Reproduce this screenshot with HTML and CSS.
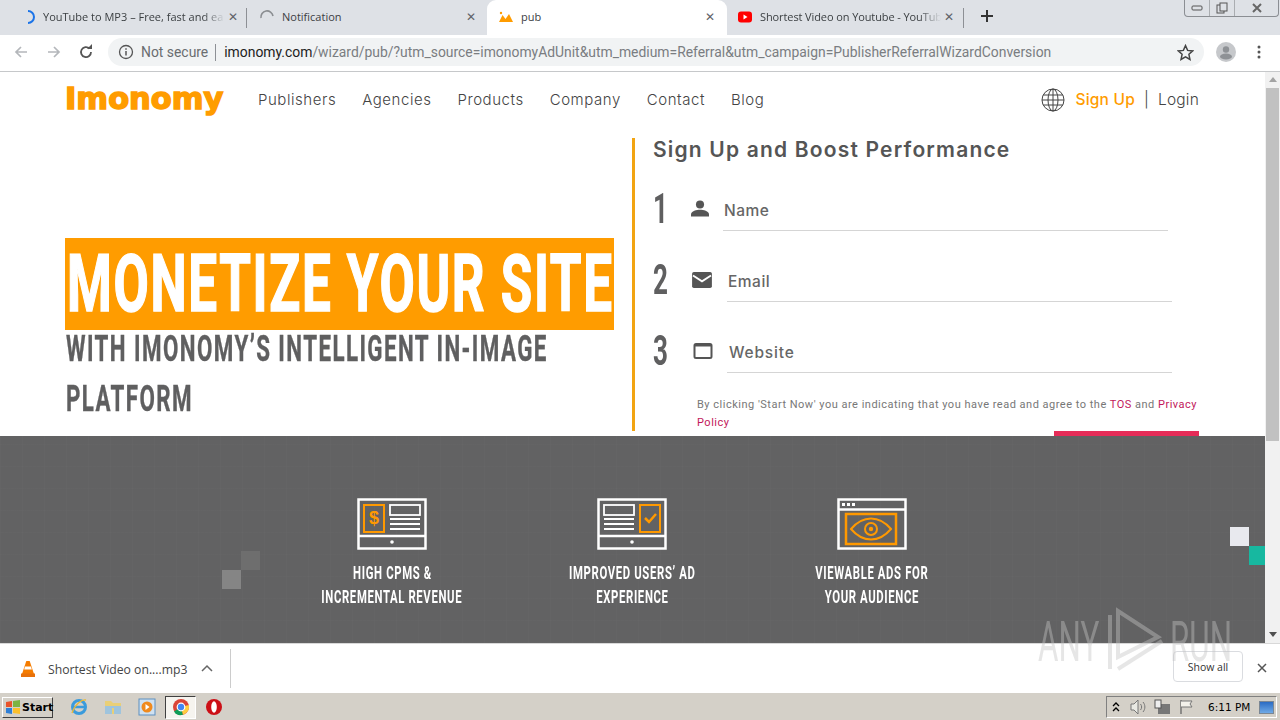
FILE: index.html
```html
<!DOCTYPE html>
<html lang="en">
<head>
<meta charset="utf-8">
<title>pub</title>
<link rel="stylesheet" href="styles.css">
</head>
<body>
<div class="chrome-tabs">
  <div class="tab">
    <svg class="fav" viewBox="0 0 16 16"><path d="M8 2a6 6 0 0 1 0 12" fill="none" stroke="#1a73e8" stroke-width="2"/></svg>
    <span class="tab-title">YouTube to MP3 – Free, fast and ea</span>
    <span class="tab-x">✕</span>
  </div>
  <div class="tab sep">
    <svg class="fav" viewBox="0 0 16 16"><path d="M2 9a6 6 0 0 1 12 -2" fill="none" stroke="#8a8d91" stroke-width="1.6"/></svg>
    <span class="tab-title">Notification</span>
    <span class="tab-x">✕</span>
  </div>
  <div class="tab active">
    <svg class="fav" viewBox="0 0 16 16"><path d="M1 13 4.500 6 7.500 10 11 5 15 13Z" fill="#ff9c00"/><circle cx="3" cy="4" r="1.200" fill="#ff9c00"/></svg>
    <span class="tab-title">pub</span>
    <span class="tab-x">✕</span>
  </div>
  <div class="tab sep">
    <svg class="fav" viewBox="0 0 16 16"><rect x="1" y="2.500" width="14" height="11" rx="3" fill="#f00"/><path d="M6.500 5.500 10.500 8 6.500 10.500Z" fill="#fff"/></svg>
    <span class="tab-title">Shortest Video on Youtube - YouTub</span>
    <span class="tab-x">✕</span>
  </div>
  <svg class="new-tab" viewBox="0 0 14 14"><path d="M7 1v12M1 7h12" stroke="#333" stroke-width="2"/></svg>
  <div class="win-btns">
    <span class="win-btn"><svg viewBox="0 0 12 8" width="12" height="8"><rect x="1" y="2" width="10" height="4" rx="1" fill="none" stroke="#555"/></svg></span>
    <span class="win-btn"><svg viewBox="0 0 12 12" width="12" height="12"><rect x="1" y="3" width="7" height="8" fill="none" stroke="#555"/><rect x="4" y="1" width="7" height="8" fill="#dee1e6" stroke="#555"/></svg></span>
    <span class="win-btn wide"><svg viewBox="0 0 12 12" width="12" height="12"><path d="M2 2l8 8M10 2l-8 8" stroke="#666" stroke-width="2" fill="none"/></svg></span>
  </div>
</div>

<div class="toolbar">
  <svg class="tool-ico back" viewBox="0 0 16 16"><path d="M14 8H3M8 3 3 8l5 5" fill="none" stroke="#b4b7bb" stroke-width="1.700"/></svg>
  <svg class="tool-ico fwd" viewBox="0 0 16 16"><path d="M2 8h11M8 3l5 5-5 5" fill="none" stroke="#b4b7bb" stroke-width="1.700"/></svg>
  <svg class="tool-ico reload" viewBox="0 0 16 16"><path d="M13 8a5 5 0 1 1-1.500-3.500" fill="none" stroke="#555" stroke-width="1.800"/><path d="M9 5h5V0Z" fill="#555"/></svg>
  <div class="omnibox">
    <svg class="info" viewBox="0 0 16 16"><circle cx="8" cy="8" r="6.500" fill="none" stroke="#555" stroke-width="1.300"/><path d="M8 7v4.500M8 4.300v1.500" stroke="#555" stroke-width="1.500"/></svg>
    <span class="not-secure">Not secure</span>
    <span class="omni-sep"></span>
    <span class="url"><b>imonomy.com</b>/wizard/pub/?utm_source=imonomyAdUnit&amp;utm_medium=Referral&amp;utm_campaign=PublisherReferralWizardConversion</span>
    <svg class="star" viewBox="0 0 16 16"><path d="M8 1.500 10 6l4.800.5-3.600 3.200 1 4.800L8 12l-4.200 2.500 1-4.800L1.200 6.500 6 6Z" fill="none" stroke="#444" stroke-width="1.400"/></svg>
  </div>
  <svg class="avatar" viewBox="0 0 20 20"><circle cx="10" cy="10" r="10" fill="#c6c8cb"/><circle cx="10" cy="7.500" r="3.200" fill="#8e9195"/><ellipse cx="10" cy="14.500" rx="6" ry="3" fill="#8e9195"/></svg>
  <svg class="dots" viewBox="0 0 4 16"><circle cx="2" cy="3" r="1.500" fill="#555"/><circle cx="2" cy="8" r="1.500" fill="#555"/><circle cx="2" cy="13" r="1.500" fill="#555"/></svg>
</div>

<div class="viewport">
  <div class="page">
    <header class="site-head">
      <a class="logo">Imonomy</a>
      <nav class="site-nav">
        <a>Publishers</a><a>Agencies</a><a>Products</a><a>Company</a><a>Contact</a><a>Blog</a>
      </nav>
      <div class="auth">
        <svg class="globe" viewBox="0 0 24 24"><g fill="none" stroke="#444" stroke-width="1"><circle cx="12" cy="12" r="11"/><ellipse cx="12" cy="12" rx="5" ry="11"/><path d="M12 1v22M2 7h20M1 12h22M2 17h20"/></g></svg>
        <a class="signup">Sign Up</a>
        <span class="bar">|</span>
        <a class="login">Login</a>
      </div>
    </header>

    <section class="hero">
      <div class="pitch">
        <div class="pitch-box"><h1 class="squeeze">MONETIZE YOUR SITE</h1></div>
        <p class="pitch-line"><span class="squeeze">WITH IMONOMY’S INTELLIGENT IN-IMAGE</span></p>
        <p class="pitch-line"><span class="squeeze">PLATFORM</span></p>
      </div>
      <div class="signup-form">
        <h2>Sign Up and Boost Performance</h2>
        <div class="field">
          <span class="num squeeze">1</span>
          <svg class="f-ico" viewBox="2 3 20 18"><circle cx="12" cy="7.500" r="4.500" fill="#555"/><path d="M2 21v-2.500c0-3.500 6.500-5 10-5s10 1.500 10 5V21Z" fill="#555"/></svg>
          <div class="f-input"><span>Name</span></div>
        </div>
        <div class="field second">
          <span class="num squeeze">2</span>
          <svg class="f-ico mail" viewBox="0 0 24 20"><rect x="1" y="1" width="22" height="18" rx="2" fill="#555"/><path d="M2 5l10 6.500L22 5" fill="none" stroke="#fff" stroke-width="2"/></svg>
          <div class="f-input"><span>Email</span></div>
        </div>
        <div class="field second">
          <span class="num squeeze">3</span>
          <svg class="f-ico web" viewBox="0 0 20 18"><rect x="1.500" y="2" width="17" height="14" rx="1.500" fill="none" stroke="#555" stroke-width="2"/><path d="M1.500 3.500h17" stroke="#555" stroke-width="2"/></svg>
          <div class="f-input web-input"><span>Website</span></div>
        </div>
        <p class="legal">By clicking 'Start Now' you are indicating that you have read and agree to the <a>TOS</a> and <a>Privacy Policy</a></p>
        <div class="start-wrap"><button class="start" aria-label="Start Now"></button></div>
      </div>
    </section>

    <section class="band">
      <span class="pix pix-a"></span>
      <span class="pix pix-b"></span>
      <span class="pix pix-c"></span>
      <span class="pix pix-d"></span>
      <div class="feature">
        <svg class="f-art" viewBox="0 0 70 52"><g fill="none" stroke="#fff" stroke-width="2.500"><rect x="1.500" y="1.500" width="67" height="49"/><path d="M1.500 38h67"/><rect x="33" y="7" width="30" height="10" stroke-width="1.800"/><path d="M33 21h30M33 26h30M33 31h30" stroke-width="2"/></g><rect x="7" y="7" width="20" height="27" fill="none" stroke="#f90" stroke-width="2"/><text class="dollar" x="17" y="26" text-anchor="middle">$</text><circle cx="35" cy="44" r="1.800" fill="#fff"/></svg>
        <h3><span class="squeeze">HIGH CPMS &amp;</span><br><span class="squeeze">INCREMENTAL REVENUE</span></h3>
      </div>
      <div class="feature">
        <svg class="f-art" viewBox="0 0 70 52"><g fill="none" stroke="#fff" stroke-width="2.500"><rect x="1.500" y="1.500" width="67" height="49"/><path d="M1.500 38h67"/><rect x="7" y="7" width="30" height="10" stroke-width="1.800"/><path d="M7 21h30M7 26h30M7 31h30" stroke-width="2"/></g><rect x="43" y="7" width="20" height="27" fill="none" stroke="#f90" stroke-width="2"/><path d="M48 20l4 4 7-8" fill="none" stroke="#f90" stroke-width="2.500"/><circle cx="35" cy="44" r="1.800" fill="#fff"/></svg>
        <h3><span class="squeeze">IMPROVED USERS’ AD</span><br><span class="squeeze">EXPERIENCE</span></h3>
      </div>
      <div class="feature">
        <svg class="f-art" viewBox="0 0 70 52"><g fill="none" stroke="#fff" stroke-width="2.500"><rect x="1.500" y="1.500" width="67" height="49"/><path d="M1.500 11.500h67"/></g><path d="M5 5h3v3H5zM10 5h3v3h-3zM15 5h3v3h-3z" fill="#fff"/><rect x="9" y="16" width="50" height="30" fill="none" stroke="#f90" stroke-width="2.500"/><path d="M14 31c12-14 28-14 40 0-12 14-28 14-40 0Z" fill="none" stroke="#f90" stroke-width="2"/><circle cx="34" cy="31" r="6" fill="none" stroke="#f90" stroke-width="2"/><circle cx="34" cy="31" r="2.200" fill="#f90"/></svg>
        <h3><span class="squeeze">VIEWABLE ADS FOR</span><br><span class="squeeze">YOUR AUDIENCE</span></h3>
      </div>
    </section>
  </div>
  <div class="scrollbar">
    <span class="arrow up"></span>
    <span class="thumb"></span>
    <span class="arrow down"></span>
  </div>
</div>

<div class="downloads">
  <svg class="cone" viewBox="0 0 16 18"><path d="M6.300 1h3.400L14 14H2Z" fill="#f57c00"/><path d="M5 6.500h6l.8 3H4.200Z" fill="#fff"/><path d="M1 13.500h14V17H1Z" fill="#e8710a"/></svg>
  <span class="dl-name">Shortest Video on....mp3</span>
  <svg class="chev" viewBox="0 0 12 8"><path d="M1 7l5-5 5 5" fill="none" stroke="#666" stroke-width="1.500"/></svg>
  <span class="dl-sep"></span>
  <button class="show-all">Show all</button>
  <svg class="dl-x" viewBox="0 0 10 10"><path d="M1 1l8 8M9 1 1 9" stroke="#555" stroke-width="1.500"/></svg>
</div>

<div class="taskbar">
  <button class="start-btn"><svg viewBox="0 0 16 16" width="16" height="16"><path d="M1 3l6-1v6H1z" fill="#e8532b"/><path d="M8 2l7-1v7H8z" fill="#7cb342"/><path d="M1 9h6v6l-6-1z" fill="#2f7fd6"/><path d="M8 9h7v6l-7-1z" fill="#fbc02d"/></svg>Start</button>
  <div class="quick">
    <svg class="q-ie" viewBox="0 0 18 18"><circle cx="9" cy="9" r="6.500" fill="none" stroke="#3a9bdc" stroke-width="3"/><path d="M3 9h12" stroke="#3a9bdc" stroke-width="2.500"/><path d="M2 15C5 6 12 1 16 2" fill="none" stroke="#e8b93a" stroke-width="1.300"/></svg>
    <svg class="q-folder" viewBox="0 0 18 18"><path d="M1 3h6l2 2h8v11H1Z" fill="#e9cf77"/><path d="M1 8h16v8H1Z" fill="#9fc4dd"/><path d="M8 10h2v6H8Z" fill="#e9cf77"/></svg>
    <svg class="q-wmp" viewBox="0 0 18 18"><rect x="1" y="1" width="16" height="16" fill="#cfe1f1" stroke="#5d8fbf"/><circle cx="9" cy="9" r="5.500" fill="#f08a1d"/><path d="M7.500 6l4 3-4 3Z" fill="#fff"/></svg>
    <span class="q-active"><svg viewBox="0 0 18 18" width="16" height="16"><circle cx="9" cy="9" r="8" fill="#db4437"/><path d="M9 9 2 13.500A8 8 0 0 0 11 16.800Z" fill="#0f9d58"/><path d="M9 9 16.800 7A8 8 0 0 1 11 16.800Z" fill="#ffcd40"/><circle cx="9" cy="9" r="3.800" fill="#4285f4" stroke="#fff" stroke-width="1.200"/></svg></span>
    <svg class="q-opera" viewBox="0 0 18 18"><circle cx="9" cy="9" r="8" fill="#cc0f16"/><ellipse cx="9" cy="9" rx="2.800" ry="5.800" fill="#fff"/></svg>
  </div>
  <div class="tray">
    <svg class="t-up" viewBox="0 0 8 10"><path d="M1 4l3-3 3 3M1 9l3-3 3 3" fill="none" stroke="#000" stroke-width="1.300"/></svg>
    <svg class="t-spk" viewBox="0 0 18 16"><path d="M2 5h3l4-4v14l-4-4H2Z" fill="#e9e9e3" stroke="#777"/><path d="M11.500 5c1.500 2 1.500 4 0 6M14 3c2.500 3 2.500 7 0 10" fill="none" stroke="#777"/></svg>
    <svg class="t-net" viewBox="0 0 18 16"><rect x="5" y="5" width="12" height="10" fill="#777"/><rect x="2" y="1" width="6" height="8" fill="#eee" stroke="#555"/></svg>
    <svg class="t-flag" viewBox="0 0 18 16"><path d="M3 1v14" stroke="#666" stroke-width="1.300"/><path d="M3 2h11l-2 3 2 3H3" fill="#f3f1ea" stroke="#777"/></svg>
    <span class="clock">6:11 PM</span>
    <span class="desk"></span>
  </div>
</div>

<div class="watermark" aria-hidden="true">
  <span>ANY</span>
  <svg viewBox="0 0 62 70" width="62" height="70"><g fill="none" stroke="#c4c4c4" stroke-width="4"><path d="M6 8v54M14 4v46l40-20Z"/><path d="M14 62l44-28"/></g></svg>
  <span>RUN</span>
</div>
</body>
</html>
```
FILE: styles.css
```css
* { box-sizing: border-box; }
html, body { margin: 0; height: 720px; overflow: hidden; }
body {
  width: 1280px;
  display: flex;
  flex-direction: column;
  position: relative;
  background: #fff;
  font-family: Roboto, "Liberation Sans", sans-serif;
  color: #555;
}
p, h1, h2, h3 { margin: 0; }
button { font: inherit; }
svg { display: block; flex: none; }

.squeeze { display: inline-block; white-space: nowrap; }

/* browser tabs */
.chrome-tabs {
  height: 35px;
  flex: none;
  display: flex;
  padding-left: 7px;
  background: #dee1e6;
  font-family: "Open Sans", sans-serif;
  font-size: 11px;
  color: #3c4043;
}
.tab {
  width: 240px;
  display: flex;
  align-items: center;
  padding: 0 6px 2px 13px;
  position: relative;
}
.tab.sep { padding-left: 12px; padding-right: 8px; }
.tab:nth-child(4) { padding-left: 10px; padding-right: 10px; letter-spacing: -.1px; }
.tab:nth-child(1)::after, .tab:nth-child(4)::after {
  content: "";
  position: absolute;
  right: 0;
  top: 8px;
  height: 20px;
  width: 1px;
  background: #8d9095;
}
.tab:nth-child(4)::after { right: 3px; }
.tab.active {
  background: #fff;
  border-radius: 9px 9px 0 0;
  padding-left: 11px;
  padding-right: 9px;
}
.fav { width: 16px; height: 16px; margin-right: 7px; }
.tab-title {
  flex: 1;
  min-width: 0;
  overflow: hidden;
  white-space: nowrap;
  -webkit-mask-image: linear-gradient(to right, #000 88%, transparent);
  mask-image: linear-gradient(to right, #000 88%, transparent);
}
.tab.active .tab-title, .tab:nth-child(2) .tab-title { -webkit-mask-image: none; mask-image: none; }
.tab-x { width: 16px; text-align: center; font-size: 12px; font-weight: 700; color: #5f6368; font-family: "DejaVu Sans", sans-serif; }
.new-tab { width: 14px; height: 14px; margin: 9px 0 0 13px; }
.win-btns {
  margin-left: auto;
  margin-right: 1px;
  height: 17px;
  display: flex;
  border: 1px solid #8b8e93;
  border-top: 0;
  border-radius: 0 0 4px 4px;
}
.win-btn { width: 25px; display: flex; align-items: center; justify-content: center; border-right: 1px solid #aaadb1; }
.win-btn.wide { width: 43px; border-right: 0; }

/* toolbar */
.toolbar {
  height: 37px;
  flex: none;
  display: flex;
  align-items: center;
  padding: 0 0 2px 13px;
  background: #fff;
  border-bottom: 1px solid #c6c8ca;
}
.tool-ico { width: 16px; height: 16px; }
.fwd { margin-left: 17px; }
.reload { margin-left: 16px; }
.omnibox {
  width: 1096px;
  height: 28px;
  margin-left: 14px;
  display: flex;
  align-items: center;
  padding: 0 10px;
  border-radius: 14px;
  background: #f1f3f4;
  font-family: Roboto, sans-serif;
  font-size: 13.900px;
  white-space: nowrap;
  color: #7a7d81;
}
.info { width: 16px; height: 16px; }
.not-secure { margin-left: 7px; color: #6a6d70; }
.omni-sep { width: 1px; height: 17px; margin: 0 8px 0 7px; background: #8d9095; }
.url { flex: 1; overflow: hidden; }
.url b { font-weight: 400; color: #222; }
.star { width: 17px; height: 17px; }
.avatar { width: 20px; height: 20px; margin-left: 12px; }
.dots { width: 4px; height: 16px; margin-left: 21px; }

/* page */
.viewport { flex: 1; min-height: 0; display: flex; }
.page { flex: 1; min-width: 0; display: flex; flex-direction: column; }
.site-head {
  height: 55px;
  flex: none;
  display: flex;
  align-items: center;
  padding: 0 66px 0 65px;
}
.logo {
  width: 159px;
  font-family: "DejaVu Sans", sans-serif;
  font-weight: 700;
  font-size: 30.500px;
  line-height: 1;
  color: #ff9c00;
  -webkit-text-stroke: 1.500px #ff9c00;
}
.site-nav { display: flex; gap: 26px; margin-left: 34px; font-family: Inter, sans-serif; font-weight: 300; font-size: 15px; letter-spacing: .55px; color: #444; }
.auth { margin-left: auto; display: flex; align-items: center; font-family: Inter, sans-serif; font-size: 15.500px; font-weight: 300; letter-spacing: .2px; color: #444; }
.globe { width: 24px; height: 24px; margin-right: 11px; }
.signup { color: #ff9c00; font-weight: 500; }
.bar { margin: 0 9px 0 9px; }

.hero { height: 309px; flex: none; display: flex; overflow: hidden; }
.pitch { width: 567px; margin-left: 65px; padding-top: 111px; flex: none; }
.pitch-box { width: 549px; height: 92px; background: #ff9c00; display: flex; align-items: center; }
.pitch-box h1 {
  font-size: 80px;
  line-height: 1;
  font-weight: 700;
  letter-spacing: 2.600px;
  color: #fff;
  -webkit-text-stroke: 1.500px #fff;
  transform: scaleX(.64);
  transform-origin: left center;
  margin-left: 2px;
}
.pitch-line {
  height: 50px;
  line-height: 50px;
  padding-left: 1px;
  font-size: 36px;
  font-weight: 700;
  letter-spacing: 2.300px;
  color: #5f5f60;
  -webkit-text-stroke: .4px #5f5f60;
}
.pitch-box + .pitch-line { margin-top: -6px; }
.pitch-line .squeeze { transform: scaleX(.62); transform-origin: left center; }

.signup-form {
  flex: 1;
  min-width: 0;
  height: 293px;
  margin-top: 11px;
  padding: 0 0 0 18px;
  border-left: 3px solid #f2a412;
}
.signup-form h2 { font-family: Inter, sans-serif; font-size: 21px; line-height: 24px; font-weight: 600; letter-spacing: 1.180px; color: #555; }
.field { height: 45px; margin-top: 24px; display: flex; align-items: center; width: 515px; }
.field.second { margin-top: 26px; width: 519px; }
.num {
  width: 38px;
  font-size: 42px;
  font-weight: 700;
  color: #5f5f60;
  transform: scaleX(.62);
  transform-origin: left center;
}
.f-ico { width: 18px; height: 17px; margin-right: 14px; }
.mail { width: 22px; height: 18px; }
.web { width: 20px; height: 18px; margin-left: 2px; margin-right: 14px; }
.f-input {
  flex: 1;
  height: 45px;
  display: flex;
  align-items: center;
  padding: 4px 0 0 1px;
  border-bottom: 1px solid #d5d5d5;
  font-family: Inter, sans-serif;
  font-size: 15.500px;
  font-weight: 500;
  letter-spacing: .5px;
  color: #666;
}
.web-input { padding-left: 2px; letter-spacing: .8px; }
.legal {
  margin: 23px 0 0 44px;
  width: 510px;
  font-size: 11px;
  line-height: 18px;
  letter-spacing: .5px;
  color: #777;
}
.legal a { color: #c2185b; }
.start-wrap { display: flex; justify-content: flex-end; width: 546px; margin-top: -1px; }
.start { width: 145px; height: 44px; border: 0; background: #e62c58; color: #fff; }

.band {
  flex: 1;
  min-height: 0;
  position: relative;
  display: flex;
  justify-content: center;
  padding: 62px 1px 0 0;
  background-color: #626263;
  background-image:
    repeating-linear-gradient(90deg, rgba(255,255,255,.015) 0 1px, transparent 1px 22px),
    repeating-linear-gradient(0deg, rgba(255,255,255,.012) 0 1px, transparent 1px 22px);
}
.pix { position: absolute; width: 19px; height: 19px; }
.pix-a { left: 222px; top: 134px; background: #858585; }
.pix-b { left: 241px; top: 115px; background: #6e6e6e; }
.pix-c { left: 1230px; top: 91px; background: #e8e9ee; }
.pix-d { left: 1249px; top: 110px; width: 16px; background: #17b8a0; }
.feature { width: 240px; display: flex; flex-direction: column; align-items: center; }
.f-art { width: 70px; height: 52px; }
.dollar { font: 700 18px "Liberation Sans", sans-serif; fill: #f90; }
.feature h3 {
  margin-top: 11px;
  text-align: center;
  font-size: 18px;
  line-height: 24px;
  font-weight: 700;
  letter-spacing: 1px;
  color: #fff;
  white-space: nowrap;
}
.feature .squeeze { transform: scaleX(.63); transform-origin: center; }

.scrollbar {
  width: 15px;
  flex: none;
  display: flex;
  flex-direction: column;
  background: #f1f1f1;
  align-items: center;
}
.arrow { width: 0; height: 0; border-left: 4px solid transparent; border-right: 4px solid transparent; }
.arrow.up { margin-top: 5px; border-bottom: 5px solid #a3a3a3; }
.arrow.down { margin-top: auto; margin-bottom: 6px; border-top: 5px solid #505050; }
.thumb { width: 13px; height: 353px; margin-top: 6px; background: #c1c1c1; }

/* downloads shelf */
.downloads {
  height: 49px;
  flex: none;
  display: flex;
  align-items: center;
  padding: 2px 0 0 20px;
  background: #fff;
  border-top: 1px solid #d8d8d8;
  font-family: "Open Sans", sans-serif;
  font-size: 12.200px;
  color: #444;
}
.cone { width: 16px; height: 18px; margin-right: 12px; }
.dl-name { width: 139px; white-space: nowrap; }
.chev { width: 12px; height: 8px; margin: -2px 0 0 14px; }
.dl-sep { width: 1px; height: 39px; margin: -2px 0 0 17px; background: #ccc; }
.show-all {
  width: 70px;
  height: 31px;
  margin: -5px 0 0 auto;
  padding: 0;
  border: 1px solid #dadce0;
  border-radius: 4px;
  background: #fff;
  font-family: "Open Sans", sans-serif;
  font-size: 10.500px;
  color: #333;
}
.dl-x { width: 10px; height: 10px; margin: -2px 13px 0 14px; }

/* windows taskbar */
.taskbar {
  height: 28px;
  flex: none;
  display: flex;
  align-items: center;
  padding: 1px 3px 0 2px;
  background: #d4d0c8;
  border-top: 1px solid #fff;
}
.start-btn {
  width: 51px;
  height: 21px;
  display: flex;
  align-items: center;
  gap: 1px;
  padding: 0 0 0 2px;
  border: 1px solid;
  border-color: #fff #404040 #404040 #fff;
  background: #d4d0c8;
  font-family: "DejaVu Sans", sans-serif;
  font-size: 11px;
  font-weight: 700;
  color: #000;
}
.quick { display: flex; align-items: center; margin-left: 17px; }
.quick svg { width: 18px; height: 18px; }
.q-folder { margin-left: 16px; }
.q-wmp { margin-left: 16px; }
.q-active {
  width: 31px;
  height: 23px;
  margin-left: 9px;
  display: flex;
  align-items: center;
  justify-content: center;
  background: #f6f4ef;
  border: 1px solid;
  border-color: #404040 #fff #fff #404040;
}
.q-opera { margin-left: 9px; }
.tray {
  width: 171px;
  height: 22px;
  margin-left: auto;
  display: flex;
  align-items: center;
  padding-left: 5px;
  border: 1px solid;
  border-color: #808080 #fff #fff #808080;
  font-family: "DejaVu Sans", sans-serif;
  font-size: 10.500px;
  color: #000;
}
.t-up { width: 8px; height: 10px; }
.t-spk { width: 18px; height: 16px; margin-left: 9px; }
.t-net { width: 18px; height: 16px; margin-left: 6px; }
.t-flag { width: 18px; height: 16px; margin-left: 7px; }
.clock { margin-left: 12px; white-space: nowrap; }
.desk { width: 15px; height: 13px; margin-left: auto; margin-right: 2px; background: linear-gradient(#2b6cc4, #6fa9e6); border: 1px solid #7b8794; }

/* sandbox watermark */
.watermark {
  position: absolute;
  left: 1038px;
  top: 607px;
  display: flex;
  align-items: center;
  gap: 4px;
  opacity: .42;
  color: #c4c4c4;
  font-family: Roboto, sans-serif;
  font-size: 56px;
  font-weight: 400;
  line-height: 70px;
}
.watermark span { display: inline-block; width: 62px; transform: scaleX(.56); transform-origin: left center; white-space: nowrap; }
```
